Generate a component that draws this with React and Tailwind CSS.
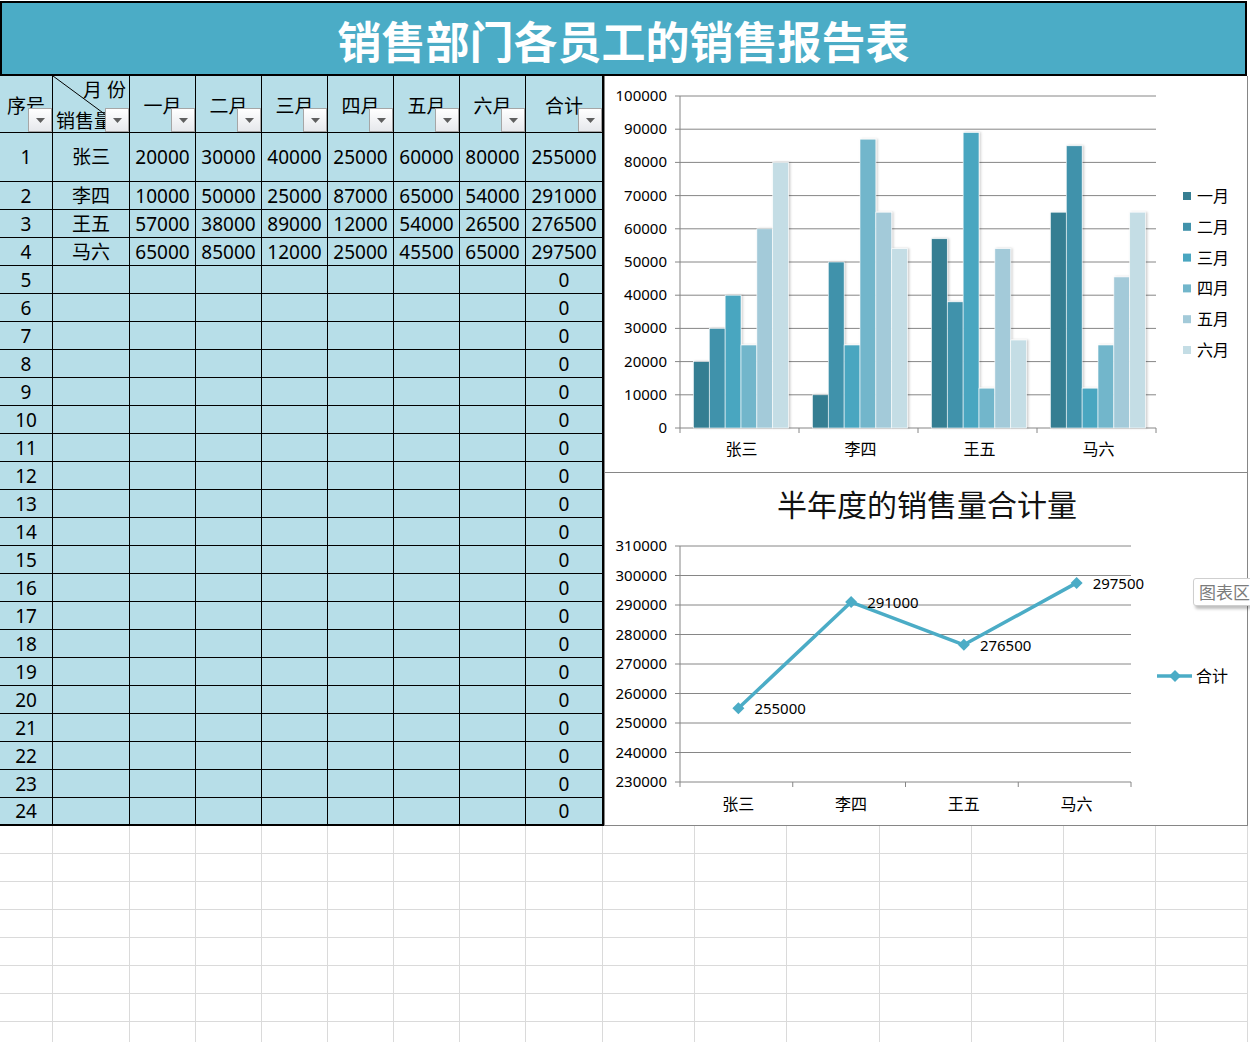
import React from "react";

const rows = [
  [1, "张三", 20000, 30000, 40000, 25000, 60000, 80000, 255000],
  [2, "李四", 10000, 50000, 25000, 87000, 65000, 54000, 291000],
  [3, "王五", 57000, 38000, 89000, 12000, 54000, 26500, 276500],
  [4, "马六", 65000, 85000, 12000, 25000, 45500, 65000, 297500],
];
for (let i = 5; i <= 24; i++) rows.push([i, "", "", "", "", "", "", "", 0]);

const months = ["一月", "二月", "三月", "四月", "五月", "六月"];
const names = ["张三", "李四", "王五", "马六"];
const barColors = ["#367E92", "#4192AB", "#4AA6C0", "#72B6CB", "#A3CAD9", "#C4DDE5"];
const totals = [255000, 291000, 276500, 297500];

const gridCols = ["w-[53px]", "w-[77px]", "w-[66px]", "w-[66px]", "w-[66px]", "w-[66px]", "w-[66px]", "w-[66px]", "w-[77px]", "w-[92px]", "w-[92px]", "w-[93px]", "w-[92px]", "w-[92px]", "w-[92px]", "w-[92px]"];

const FONT = "'Noto Sans','Noto Sans CJK SC',sans-serif";

function FilterBtn() {
  return (
    <div className="absolute right-0 bottom-0 w-[24px] h-[24px] border border-[#a6a6a6] bg-gradient-to-b from-white to-[#e6e8ec] flex items-center justify-center">
      <svg width="9" height="5" viewBox="0 0 9 5">
        <polygon points="0,0 9,0 4.5,5" fill="#5f5f5f" />
      </svg>
    </div>
  );
}

function HeaderRow() {
  const base = "relative h-[57px] border-r border-b border-black flex items-center justify-center";
  return (
    <>
      <div className={base}>
        <span className="mt-[4px]">序号</span>
        <FilterBtn />
      </div>
      <div className={base}>
        <svg className="absolute inset-0" width="76" height="56">
          <line x1="0" y1="0" x2="76" y2="56" stroke="#000" strokeWidth="1" />
        </svg>
        <span className="absolute right-[3px] top-[5px]">月 份</span>
        <span className="absolute left-[3px] bottom-[1px]">销售量</span>
        <FilterBtn />
      </div>
      {months.map((m) => (
        <div key={m} className={base}>
          <span className="mt-[4px]">{m}</span>
          <FilterBtn />
        </div>
      ))}
      <div className="relative h-[57px] border-b border-black flex items-center justify-center">
        <span className="mt-[4px]">合计</span>
        <FilterBtn />
      </div>
    </>
  );
}

function BodyRow({ r, idx }) {
  const h = idx === 0 ? "h-[49px]" : idx === rows.length - 1 ? "h-[26px]" : "h-[28px]";
  const bb = idx === rows.length - 1 ? "" : "border-b";
  return (
    <>
      {r.map((v, j) => (
        <div
          key={j}
          className={`${h} ${bb} ${j < 8 ? "border-r" : ""} border-black flex items-center justify-center pt-[1px]`}
        >
          {v}
        </div>
      ))}
    </>
  );
}

function BarChart() {
  const x0 = 75, x1 = 551, y0 = 20, y1 = 352;
  const cw = (x1 - x0) / 4;
  const bw = cw / 7.5;
  const ticks = [];
  for (let k = 0; k <= 10; k++) ticks.push(k * 10000);
  const yOf = (v) => y1 - (v * (y1 - y0)) / 100000;
  return (
    <svg width="643" height="396" fontFamily={FONT}>
      <defs>
        <filter id="bs" x="-20%" y="-5%" width="160%" height="110%">
          <feDropShadow dx="1.5" dy="0" stdDeviation="1" floodColor="#000" floodOpacity="0.2" />
        </filter>
      </defs>
      {ticks.map((t) => (
        <g key={t}>
          <line x1={x0 - 5} x2={x1} y1={yOf(t)} y2={yOf(t)} stroke="#868686" strokeWidth="1" />
          <text x={62} y={yOf(t) + 5} fontSize="15" textAnchor="end" fill="#000">{t}</text>
        </g>
      ))}
      <line x1={x0} x2={x0} y1={y0} y2={y1} stroke="#868686" />
      {[0, 1, 2, 3, 4].map((i) => (
        <line key={i} x1={x0 + i * cw} x2={x0 + i * cw} y1={y1} y2={y1 + 5} stroke="#868686" />
      ))}
      {rows.slice(0, 4).map((r, i) => (
        <g key={i} filter="url(#bs)">
          {r.slice(2, 8).map((v, j) => (
            <rect
              key={j}
              x={x0 + i * cw + bw * 0.75 + j * bw + 1.5}
              y={yOf(v)}
              width={bw}
              height={y1 - yOf(v)}
              fill={barColors[j]}
              stroke="#fff"
              strokeWidth="0.6"
            />
          ))}
        </g>
      ))}
      {names.map((n, i) => (
        <text key={n} x={x0 + cw * (i + 0.5) + 2} y={379} fontSize="16" textAnchor="middle" fill="#000">{n}</text>
      ))}
      {months.map((m, j) => (
        <g key={m}>
          <rect x={578} y={116 + j * 30.8} width="8" height="8" fill={barColors[j]} />
          <text x={592} y={126 + j * 30.8} fontSize="16" fill="#000">{m}</text>
        </g>
      ))}
    </svg>
  );
}

function LineChart() {
  const x0 = 75, x1 = 526, yT = 73, yB = 309;
  const cw = (x1 - x0) / 4;
  const ticks = [];
  for (let k = 23; k <= 31; k++) ticks.push(k * 10000);
  const yOf = (v) => yB - ((v - 230000) * (yB - yT)) / 80000;
  const pts = totals.map((v, i) => [x0 + cw * (i + 0.5) + 2, yOf(v)]);
  const diamond = (x, y, s) => `${x},${y - s} ${x + s},${y} ${x},${y + s} ${x - s},${y}`;
  return (
    <svg width="643" height="352" fontFamily={FONT}>
      <text x="322" y="43" fontSize="30" textAnchor="middle" fill="#111" fontWeight="400" fontFamily="'Noto Sans CJK SC',serif">半年度的销售量合计量</text>
      {ticks.map((t) => (
        <g key={t}>
          <line x1={x0 - 5} x2={x1} y1={yOf(t)} y2={yOf(t)} stroke="#868686" />
          <text x={62} y={yOf(t) + 5} fontSize="15" textAnchor="end" fill="#000">{t}</text>
        </g>
      ))}
      <line x1={x0} x2={x0} y1={yT} y2={yB} stroke="#868686" />
      {[0, 1, 2, 3, 4].map((i) => (
        <line key={i} x1={x0 + i * cw} x2={x0 + i * cw} y1={yB} y2={yB + 5} stroke="#868686" />
      ))}
      <polyline points={pts.map((p) => p.join(",")).join(" ")} fill="none" stroke="#4BACC6" strokeWidth="3.5" strokeLinejoin="round" />
      {pts.map(([x, y], i) => (
        <g key={i}>
          <polygon points={diamond(x, y, 6)} fill="#4BACC6" />
          <text x={x + 16} y={y + 6} fontSize="15" fill="#000">{totals[i]}</text>
        </g>
      ))}
      {names.map((n, i) => (
        <text key={n} x={x0 + cw * (i + 0.5) + 2} y={337} fontSize="16" textAnchor="middle" fill="#000">{n}</text>
      ))}
      <line x1="552" x2="587" y1="203" y2="203" stroke="#4BACC6" strokeWidth="3.5" />
      <polygon points={diamond(570, 203, 6)} fill="#4BACC6" />
      <text x="591" y="209" fontSize="16" fill="#000">合计</text>
    </svg>
  );
}

export default function App() {
  return (
    <div className="relative w-[1250px] h-[1042px] overflow-hidden bg-white [font-family:'Noto_Sans','Noto_Sans_CJK_SC',sans-serif]">
      <div className="h-px" />
      <div className="w-[1247px] h-[75px] border-2 border-black bg-[#4BACC6] flex items-center justify-center">
        <h1 className="text-white text-[44px] font-bold leading-none mt-[3px] [font-family:'Noto_Sans_CJK_SC',sans-serif]">
          销售部门各员工的销售报告表
        </h1>
      </div>
      <div className="flex">
        <div className="w-[604px] border-r-2 border-b-2 border-black bg-[#B7DEE8] grid grid-cols-[53px_77px_66px_66px_66px_66px_66px_66px_76px] text-[19px] text-black leading-none">
          <HeaderRow />
          {rows.map((r, i) => (
            <BodyRow key={i} r={r} idx={i} />
          ))}
        </div>
        <div className="w-[644px] flex flex-col">
          <div className="h-[397px] border border-t-0 border-[#868686] bg-white">
            <BarChart />
          </div>
          <div className="h-[353px] border border-t-0 border-[#868686] bg-white">
            <LineChart />
          </div>
        </div>
      </div>
      <div className="flex flex-col">
        {[0, 1, 2, 3, 4, 5, 6, 7].map((r) => (
          <div key={r} className="flex">
            {gridCols.map((w, c) => (
              <div key={c} className={`${w} h-[28px] shrink-0 border-r border-b border-[#dadada]`} />
            ))}
          </div>
        ))}
      </div>
      <div className="absolute left-[1193px] top-[578px] w-[80px] h-[28px] rounded-[3px] border border-[#cfcfcf] bg-white shadow-[2px_3px_3px_rgba(0,0,0,0.25)] pl-[5px] flex items-center text-[17px] text-[#7b7b7b] [font-family:'Noto_Sans_CJK_SC',sans-serif]">
        图表区
      </div>
    </div>
  );
}
